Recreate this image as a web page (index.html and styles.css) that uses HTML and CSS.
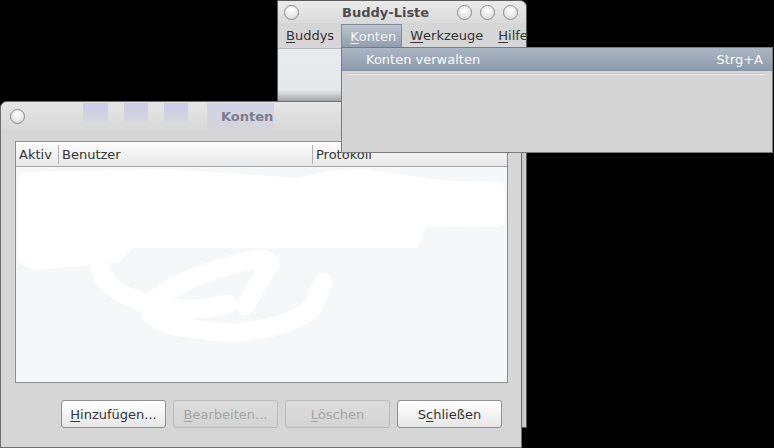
FILE: index.html
```html
<!DOCTYPE html>
<html lang="de">
<head>
<meta charset="utf-8">
<title>Konten</title>
<link rel="stylesheet" href="styles.css">
</head>
<body>
<div class="desktop">

  <div class="win buddy">
    <div class="titlebar btitle">
      <span class="wbtn"></span>
      <span class="title btitle-text">Buddy-Liste</span>
      <span class="wbtns"><span class="wbtn"></span><span class="wbtn"></span><span class="wbtn"></span></span>
    </div>
    <div class="menubar">
      <span class="mitem"><u>B</u>uddys</span>
      <span class="mitem active"><u>K</u>onten</span>
      <span class="mitem"><u>W</u>erkzeuge</span>
      <span class="mitem"><u>H</u>ilfe</span>
    </div>
    <div class="bbody">
      <div class="blist"></div>
      <div class="bscroll"></div>
    </div>
  </div>

  <div class="win konten">
    <div class="titlebar ktitle">
      <span class="stripe s1"></span>
      <span class="stripe s2"></span>
      <span class="stripe s3"></span>
      <span class="stripe s4"></span>
      <span class="wbtn"></span>
      <span class="title ktitle-text">Konten</span>
    </div>
    <div class="kbody">
      <div class="tree">
        <div class="thead">
          <div class="th c1">Aktiv</div>
          <div class="th c2">Benutzer</div>
          <div class="th c3">Protokoll</div>
        </div>
        <div class="tlist">
          <svg class="scribble" width="490" height="214" viewBox="16 167 490 214">
            <path d="M26 180 L165 177 L300 186 L330 179 L360 177 L440 188 L497 190 L497 219 L420 218 L412 240 L130 240 L115 255 L35 262 L26 258 Z" fill="#fff" stroke="#fff" stroke-width="16" stroke-linejoin="round"/>
            <g fill="none" stroke="#fff" stroke-width="19" stroke-linecap="round" stroke-linejoin="round">
              <path d="M100 268 C105 288 125 297 150 304 C175 311 200 311 228 304"/>
              <path d="M152 302 C170 286 195 276 228 266 C250 259 266 256 270 264 L245 306"/>
              <path d="M150 310 C154 324 175 328 230 333 C268 330 296 324 314 306 L323 282"/>
            </g>
          </svg>
        </div>
      </div>
      <div class="buttons">
        <span class="btn"><span><u>H</u>inzufügen...</span></span>
        <span class="btn dis"><span><u>B</u>earbeiten...</span></span>
        <span class="btn dis"><span><u>L</u>öschen</span></span>
        <span class="btn"><span>S<u>c</u>hließen</span></span>
      </div>
    </div>
  </div>

  <div class="menu">
    <div class="mi"><span>Konten verwalten</span><span>Strg+A</span></div>
    <div class="msep"></div>
  </div>

</div>
</body>
</html>
```

FILE: styles.css
```css
html, body {
  margin: 0;
  padding: 0;
  background: #000;
}

body {
  font-family: "DejaVu Sans", "Noto Sans", sans-serif;
  font-size: 13px;
  color: #343434;
}

.desktop {
  position: relative;
  width: 774px;
  height: 448px;
  overflow: hidden;
  background: #000;
}

u {
  text-decoration: underline;
  text-underline-offset: 2px;
}

/* generic window */
.win {
  position: absolute;
  display: flex;
  flex-direction: column;
  box-sizing: border-box;
  overflow: hidden;
  background: #d6d6d6;
}

.titlebar {
  display: flex;
  align-items: center;
  flex: none;
  position: relative;
}

.wbtn {
  display: block;
  flex: none;
  width: 15px;
  height: 15px;
  box-sizing: border-box;
  border-radius: 50%;
  border: 1px solid #8a8a8a;
  background: radial-gradient(circle at 50% 30%, #ffffff 0, #f3f3f3 35%, #d2d2d2 100%);
}

.title {
  font-weight: bold;
  white-space: nowrap;
}

/* Buddy-Liste window */
.buddy {
  left: 277px;
  top: 0;
  width: 250px;
  height: 428px;
  border: 1px solid #5c5c5c;
  border-radius: 0 7px 0 0;
}

.btitle {
  height: 22px;
  padding: 0 8px 0 6px;
  background: linear-gradient(#ebebeb, #dadada);
}

.btitle-text {
  margin-left: 43px;
  color: #4d4d4d;
}

.wbtns {
  margin-left: auto;
  display: flex;
  gap: 8px;
}

.menubar {
  flex: none;
  height: 25px;
  display: flex;
  align-items: stretch;
  background: #d6d6d6;
  white-space: nowrap;
  overflow: hidden;
  color: #333;
}

.mitem {
  display: flex;
  align-items: center;
  padding: 0 7px 0 8px;
}

.mitem.active {
  margin-top: 1px;
  padding: 0 5px 0 8px;
  border: 1px solid #7e8b9b;
  border-bottom: none;
  background: linear-gradient(#bcc5cf, #8f9cad);
  color: #f6f6f6;
}

.bbody {
  flex: 1;
  display: flex;
  border-top: 1px solid #b8b8b8;
}

.blist {
  flex: 1;
  background: linear-gradient(#e8ebee 0, #e6e9ec 40px, #c9cbcd 52px);
}

.bscroll {
  width: 5px;
  background: #dcdcdc;
  border-left: 1px solid #b2b2b2;
}

/* Konten window */
.konten {
  left: 0;
  top: 101px;
  width: 522px;
  height: 347px;
  border: 1px solid #6e6e6e;
  border-radius: 7px 7px 0 0;
  box-shadow: 0 -3px 8px rgba(0, 0, 0, 0.25);
}

.ktitle {
  height: 28px;
  padding-left: 9px;
  background: linear-gradient(#e6e6e6, #d8d8d8);
}

.ktitle-text {
  margin-left: 196px;
  color: #7b7b8d;
  position: relative;
}

.stripe {
  position: absolute;
  top: 1px;
  height: 20px;
  background: linear-gradient(rgba(150, 150, 235, 0.32), rgba(150, 150, 235, 0.12) 80%, rgba(150, 150, 235, 0));
}

.s1 { left: 82px; width: 25px; }
.s2 { left: 123px; width: 24px; }
.s3 { left: 163px; width: 24px; }
.s4 { left: 206px; width: 67px; height: 26px; background: linear-gradient(rgba(160, 160, 235, 0.28), rgba(160, 160, 235, 0.08)); }

.kbody {
  flex: 1;
  display: flex;
  flex-direction: column;
  padding: 11px 13px 19px 14px;
}

.tree {
  height: 242px;
  box-sizing: border-box;
  border: 1px solid #8c8c8c;
  display: flex;
  flex-direction: column;
  background: #f6f7f9;
}

.thead {
  flex: none;
  height: 24px;
  display: flex;
  border-bottom: 1px solid #a4a4a4;
  background: linear-gradient(#fdfdfd, #e8e8e8);
}

.th {
  display: flex;
  align-items: center;
  margin: 3px 0 2px;
  padding-left: 3px;
  box-sizing: border-box;
  color: #333;
  white-space: nowrap;
}

.c1 { width: 42px; }
.c2 { width: 254px; border-left: 1px solid #b0b0b0; }
.c3 { flex: 1; border-left: 1px solid #b0b0b0; }

.tlist {
  flex: 1;
  position: relative;
  overflow: hidden;
  background: #f6f7f9;
}

.scribble {
  position: absolute;
  left: 0;
  top: 0;
}

.buttons {
  margin-top: 17px;
  display: flex;
  justify-content: flex-end;
  gap: 7px;
  padding-right: 6px;
}

.btn {
  width: 105px;
  height: 28px;
  box-sizing: border-box;
  display: flex;
  align-items: center;
  justify-content: center;
  border: 1px solid #8f8f8f;
  border-radius: 3px;
  background: linear-gradient(#ffffff, #f3f3f3 50%, #e6e6e6);
  color: #333;
  white-space: nowrap;
}

.btn.dis {
  border-color: #bababa;
  background: linear-gradient(#dcdcdc, #d4d4d4);
  color: #a3a3a3;
}

/* drop-down menu */
.menu {
  position: absolute;
  left: 341px;
  top: 47px;
  width: 432px;
  height: 106px;
  box-sizing: border-box;
  border: 1px solid #7a7a7a;
  background: #d5d5d5;
}

.mi {
  height: 23px;
  display: flex;
  align-items: center;
  justify-content: space-between;
  padding: 0 9px 0 24px;
  background: linear-gradient(#abb6c4, #8a98aa);
  color: #fbfbfb;
}

.msep {
  margin: 2px 8px 0;
  height: 1px;
  border-bottom: 1px solid #ececec;
  background: #c6c6c6;
}
```
